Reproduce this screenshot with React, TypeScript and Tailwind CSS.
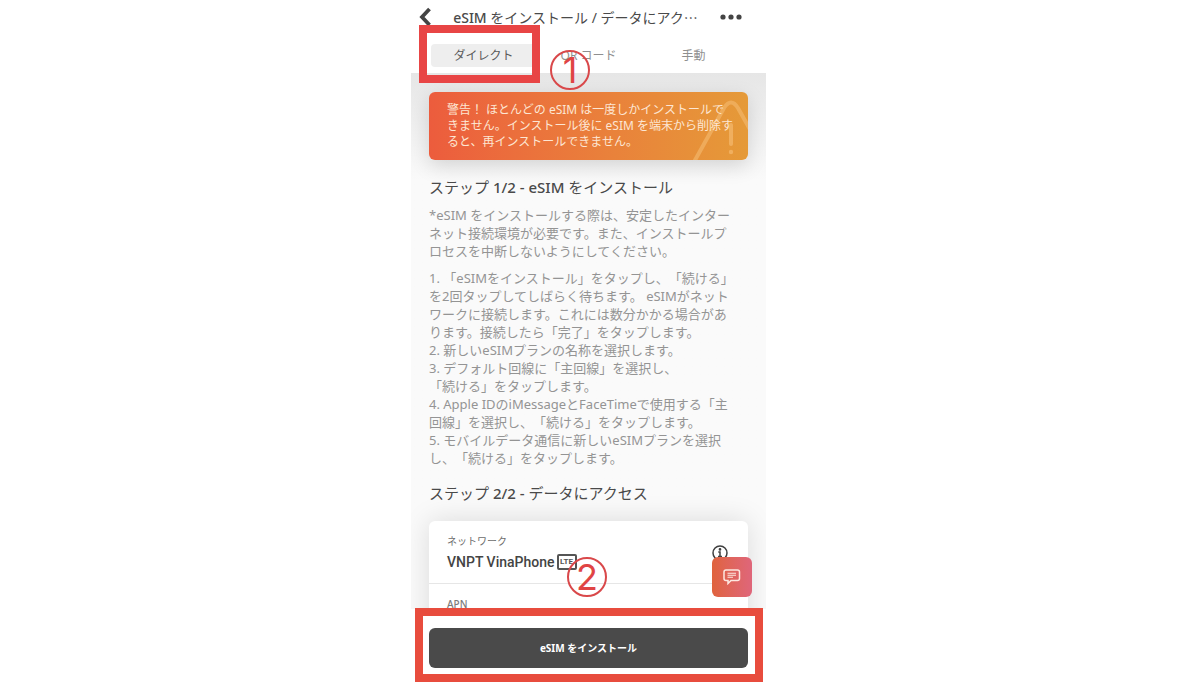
import { useState } from "react";
import { clsx } from "clsx";

const tabs = [
  { id: "direct", label: "ダイレクト" },
  { id: "qr", label: "QR コード" },
  { id: "manual", label: "手動" },
];

const noteLines = [
  "*eSIM をインストールする際は、安定したインター",
  "ネット接続環境が必要です。また、インストールプ",
  "ロセスを中断しないようにしてください。",
];

const stepLines = [
  "1. 「eSIMをインストール」をタップし、「続ける」",
  "を2回タップしてしばらく待ちます。 eSIMがネット",
  "ワークに接続します。これには数分かかる場合があ",
  "ります。接続したら「完了」をタップします。",
  "2. 新しいeSIMプランの名称を選択します。",
  "3. デフォルト回線に「主回線」を選択し、",
  "「続ける」をタップします。",
  "4. Apple IDのiMessageとFaceTimeで使用する「主",
  "回線」を選択し、「続ける」をタップします。",
  "5. モバイルデータ通信に新しいeSIMプランを選択",
  "し、「続ける」をタップします。",
];

function Lines({ lines, className }: { lines: string[]; className?: string }) {
  return (
    <p className={clsx("whitespace-nowrap [text-spacing-trim:space-all]", className)}>
      {lines.map((line) => (
        <span key={line} className="block">
          {line}
        </span>
      ))}
    </p>
  );
}

function Marker({ n, className }: { n: number; className: string }) {
  return (
    <span
      className={clsx(
        "absolute flex h-10 w-10 items-center justify-center rounded-full border-2 border-[#d9484a] font-[Inter,sans-serif] text-4xl leading-none text-[#e04444]",
        className
      )}
    >
      {n}
    </span>
  );
}

function WarningBanner() {
  return (
    <div
      role="alert"
      className="relative overflow-hidden rounded-md bg-linear-to-r from-[#ec5c3d] to-[#e59a38] px-[18px] py-[10px] shadow-[0_6px_20px_rgba(0,0,0,0.14)]"
    >
      <svg className="absolute right-0 top-0 h-full w-[60px]" viewBox="0 0 60 68" fill="none">
        <path d="M6 70 L36 16 Q43 5 50 16 L64 41" stroke="#f2b568" strokeWidth="4" opacity="0.7" />
        <path d="M43 33v19" stroke="#f2b568" strokeWidth="4" strokeLinecap="round" opacity="0.8" />
        <circle cx="43" cy="60" r="2.2" fill="#f2b568" opacity="0.8" />
      </svg>
      <Lines
        className="relative text-xs leading-4 text-[#fde6d3]"
        lines={[
          "警告！ ほとんどの eSIM は一度しかインストールで",
          "きません。インストール後に eSIM を端末から削除す",
          "ると、再インストールできません。",
        ]}
      />
    </div>
  );
}

function NetworkCard() {
  return (
    <section className="mt-[18px] rounded-md bg-white shadow-[0_0_28px_rgba(0,0,0,0.13)]">
      <div className="flex h-[63px] items-start justify-between border-b border-[#e6e6e6] px-[18px] pt-3">
        <div>
          <div className="text-[10px] leading-4 text-[#6c6c6c]">ネットワーク</div>
          <div className="mt-[3px] flex items-center gap-0.5 font-[Roboto,sans-serif] text-sm leading-5 font-medium text-[#444]">
            VNPT VinaPhone
            <span className="flex h-4 w-5 items-center justify-center rounded-xs border-2 border-[#555] text-[8px] leading-none font-bold text-[#555]">
              LTE
            </span>
          </div>
        </div>
        <button type="button" aria-label="情報" className="mr-[2px] mt-3">
          <svg className="h-4 w-4" viewBox="0 0 16 16" fill="none" stroke="#3f3f3f" strokeWidth="1.5">
            <circle cx="8" cy="8" r="7" />
            <path d="M6.3 7H8v4.3M6 11.5h4" />
            <circle cx="8" cy="4.4" r="0.6" fill="#3f3f3f" />
          </svg>
        </button>
      </div>
      <div className="px-[18px] pt-3 pb-10 text-[10px] leading-4 font-medium text-[#7c7c7c]">APN</div>
    </section>
  );
}

export default function App() {
  const [active, setActive] = useState("direct");

  return (
    <div className="flex h-screen justify-center overflow-hidden bg-white pr-[23px] font-['Noto_Sans','Noto_Sans_CJK_JP',sans-serif]">
      <div className="relative flex w-full max-w-[355px] flex-col">
        <header className="relative z-10 bg-white pb-[6px]">
          <div className="flex h-[34px] items-center justify-between pl-2 pr-6">
            <button type="button" aria-label="戻る">
              <svg className="h-5 w-3" viewBox="0 0 12 20" fill="none">
                <path d="M10.5 2 L3 10 L10.5 18" stroke="#444" strokeWidth="3.8" />
              </svg>
            </button>
            <h1 className="whitespace-nowrap text-sm leading-4 text-[#4a4a4a]">
              <span className="font-medium">eSIM</span> をインストール / データにアク
              <span className="font-['Noto_Sans_CJK_JP',sans-serif]">…</span>
            </h1>
            <button type="button" aria-label="メニュー">
              <svg className="h-2 w-[22px]" viewBox="0 0 22 8" fill="#444">
                <circle cx="3" cy="4" r="2.6" />
                <circle cx="11" cy="4" r="2.6" />
                <circle cx="19" cy="4" r="2.6" />
              </svg>
            </button>
          </div>
          <div role="tablist" className="mx-5 mt-[10px] flex">
            {tabs.map((tab) => (
              <button
                key={tab.id}
                type="button"
                role="tab"
                aria-selected={active === tab.id}
                onClick={() => setActive(tab.id)}
                className={clsx(
                  "h-[23px] flex-1 rounded-sm text-xs",
                  active === tab.id ? "bg-[#eeeeee] text-[#5a5a5a]" : "text-[#8f8f8f]"
                )}
              >
                {tab.label}
              </button>
            ))}
          </div>
          <div className="absolute left-2 top-[25px] h-[58px] w-[121px] border-8 border-[#e84545]" />
          <Marker n={1} className="left-[139px] top-[50px]" />
        </header>

        <main className="min-h-0 flex-1 overflow-hidden bg-linear-to-b from-[#e6e6e6] via-[#fafafa] via-20% to-[#fafafa] px-[18px] pt-[19px]">
          <WarningBanner />
          <h2 className="mt-[17px] text-[15px] leading-5 text-[#4a4a4a]">
            ステップ <span className="font-medium">1/2 - eSIM</span> をインストール
          </h2>
          <Lines lines={noteLines} className="mt-[9px] text-[13px] leading-[18px] text-[#949494]" />
          <Lines lines={stepLines} className="mt-[9px] text-[13px] leading-[18px] text-[#949494]" />
          <h2 className="mt-4 text-[15px] leading-5 text-[#4a4a4a]">
            ステップ <span className="font-medium">2/2 -</span> データにアクセス
          </h2>
          <NetworkCard />
        </main>

        <footer className="relative bg-white px-[18px] pt-[19px] pb-4">
          <button type="button" className="h-10 w-full rounded-md bg-[#4a4a4a] text-[10px] font-bold text-white">
            eSIM をインストール
          </button>
          <div className="pointer-events-none absolute left-1 right-[3px] -top-px bottom-[2px] border-8 border-[#e84c3d]" />
          <button
            type="button"
            aria-label="チャット"
            className="absolute bottom-[87px] right-[14px] flex h-10 w-10 items-center justify-center rounded-md bg-linear-to-r from-[#e0633c] to-[#df667a]"
          >
            <svg className="h-4 w-[18px]" viewBox="0 0 18 16" fill="none" stroke="#fde8e0" strokeWidth="1.5">
              <path d="M3 1h11.5a2 2 0 0 1 2 2v6.5a2 2 0 0 1-2 2H8L5 14.5v-3H3a2 2 0 0 1-2-2V3a2 2 0 0 1 2-2Z" />
              <path d="M4.5 4.2h8.5M4.5 6.2h8.5M4.5 8.2h5.5" strokeWidth="1.1" />
            </svg>
          </button>
          <Marker n={2} className="-top-[52px] left-[156px]" />
        </footer>
      </div>
    </div>
  );
}
